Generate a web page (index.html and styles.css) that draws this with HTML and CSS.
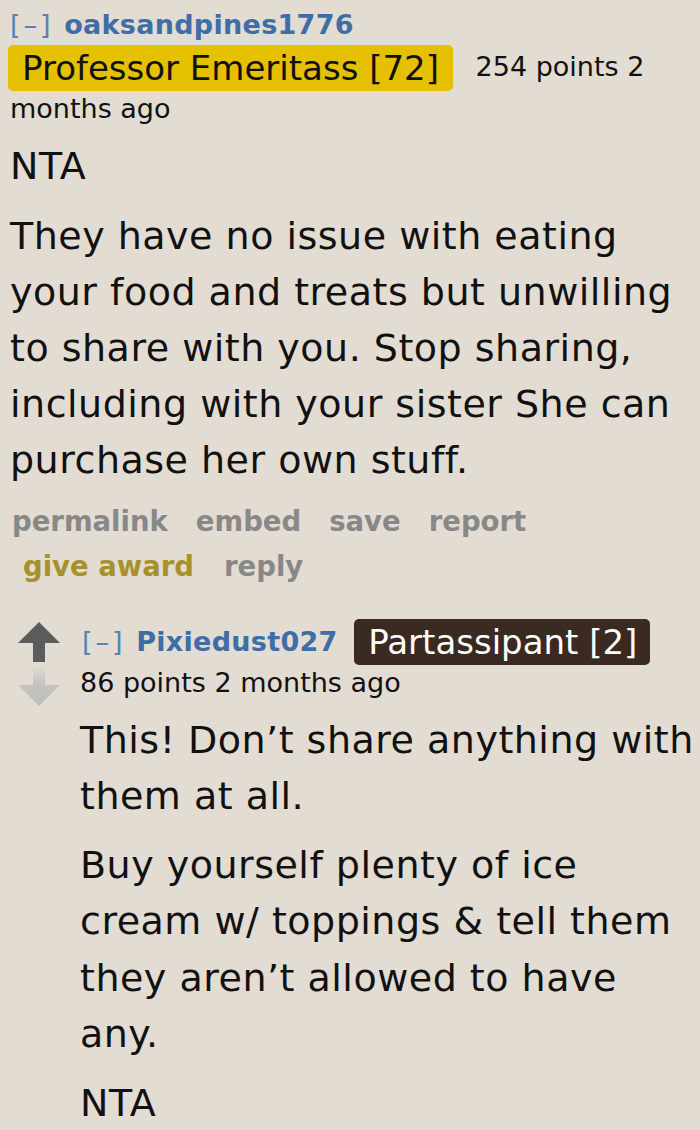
FILE: index.html
```html
<!DOCTYPE html>
<html>
<head>
<meta charset="utf-8">
<link rel="stylesheet" href="styles.css">
</head>
<body>
<div class="comment top">
  <div class="tagline">
    <span class="expand">[–]</span> <span class="author">oaksandpines1776</span>
    <span class="flair gold">Professor Emeritass [72]</span>
    <span class="score">254 points 2 months ago</span>
  </div>
  <div class="md">
    <p class="nta">NTA</p>
    <p>They have no issue with eating your food and treats but unwilling to share with you. Stop sharing, including with your sister She can purchase her own stuff.</p>
  </div>
  <ul class="buttons">
    <li>permalink</li><li>embed</li><li>save</li><li>report</li><li class="award">give award</li><li>reply</li>
  </ul>
</div>
<div class="comment child">
  <div class="votes">
    <svg class="arrow" width="44" height="42" viewBox="0 0 44 42"><path d="M22 1 L43 22 L28 22 L28 41 L16 41 L16 22 L1 22 Z" fill="#5c5c5c"/></svg>
    <svg class="arrow" width="44" height="42" viewBox="0 0 44 42"><defs><linearGradient id="g" x1="0" y1="0" x2="0" y2="1"><stop offset="0" stop-color="#e0dbd3"/><stop offset="0.4" stop-color="#c6c5c3"/><stop offset="1" stop-color="#bdbdbd"/></linearGradient></defs><path d="M16 1 L28 1 L28 19 L43 19 L22 40 L1 19 L16 19 Z" fill="url(#g)"/></svg>
  </div>
  <div class="entry">
    <div class="tagline">
      <span class="expand">[–]</span> <span class="author">Pixiedust027</span>
      <span class="flair dark">Partassipant [2]</span>
    </div>
    <div class="score line">86 points 2 months ago</div>
    <div class="md">
      <p>This! Don’t share anything with them at all.</p>
      <p>Buy yourself plenty of ice cream w/ toppings &amp; tell them they aren’t allowed to have any.</p>
      <p>NTA</p>
    </div>
  </div>
</div>
</body>
</html>
```
FILE: styles.css
```css
html, body {
  margin: 0;
  padding: 0;
  background: #e2dcd3;
}
body {
  font-family: "DejaVu Sans", "Liberation Sans", sans-serif;
  color: #111;
  width: 700px;
  height: 1130px;
  overflow: hidden;
}
.comment.top {
  padding: 4px 0 0 10px;
}
.tagline {
  font-size: 27px;
  line-height: 41.5px;
}
.expand {
  color: #5a82b4;
  letter-spacing: 3px;
  font-weight: normal;
}
.author {
  color: #3f6da6;
  font-weight: bold;
  margin-left: 2px;
  letter-spacing: 0.3px;
}
.flair {
  display: inline-block;
  font-size: 34px;
  line-height: 46px;
  padding: 0 14px;
  border-radius: 5px;
  margin-top: -3px;
  margin-bottom: -3px;
  vertical-align: middle;
}
.flair.gold {
  background: #e4c000;
  color: #111;
  margin-left: -2px;
  margin-right: 14px;
}
.flair.dark {
  background: #3b2a22;
  color: #fff;
  margin-left: 8px;
  padding: 0 13px 0 14px;
}
.score {
  font-size: 27px;
  color: #111;
}
.md p {
  margin: 0;
  font-size: 38px;
  letter-spacing: 0.5px;
  line-height: 56px;
}
.top .md {
  margin-top: 8px;
}
.top .md p.nta {
  margin-bottom: 14px;
}
.buttons {
  list-style: none;
  margin: 11px 0 0 0;
  padding: 0;
  font-size: 27.5px;
  line-height: 45px;
  font-weight: bold;
  color: #888888;
}
.buttons li {
  display: inline-block;
  margin: 0 26px 0 2px;
}
.buttons li.award {
  color: #a8912c;
  margin-left: 13px;
  margin-right: 28px;
}
.comment.child {
  display: flex;
  margin-top: 30px;
  padding-left: 17px;
}
.votes {
  width: 63px;
  flex: none;
  display: flex;
  flex-direction: column;
  gap: 3px;
  padding-top: 2px;
}
.arrow {
  display: block;
}
.entry {
  width: 620px;
  flex: none;
}
.entry .tagline {
  line-height: 46px;
  margin-left: 2px;
}
.entry .flair {
  margin-top: 0;
  margin-bottom: 0;
  vertical-align: top;
}
.score.line {
  line-height: 36px;
}
.entry .md {
  margin-top: 11px;
}
.entry .md p {
  line-height: 56.5px;
  margin-bottom: 12px;
}
```
